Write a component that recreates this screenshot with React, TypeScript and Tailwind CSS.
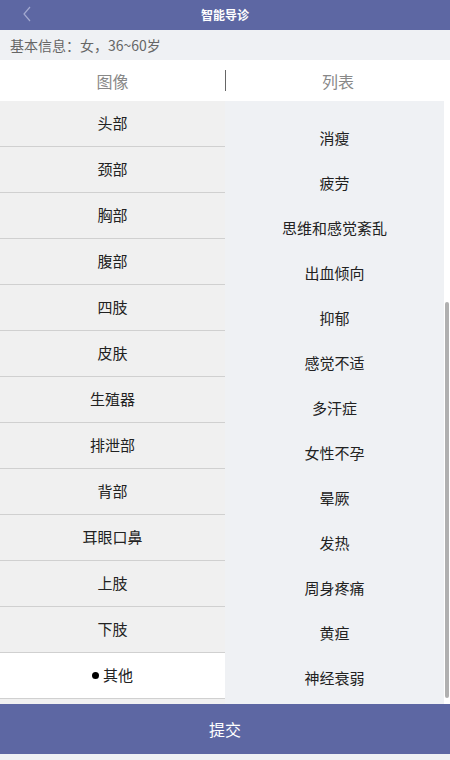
import React from "react";

const left = ["头部", "颈部", "胸部", "腹部", "四肢", "皮肤", "生殖器", "排泄部", "背部", "耳眼口鼻", "上肢", "下肢", "其他"];
const right = ["消瘦", "疲劳", "思维和感觉紊乱", "出血倾向", "抑郁", "感觉不适", "多汗症", "女性不孕", "晕厥", "发热", "周身疼痛", "黄疸", "神经衰弱"];

export default function App() {
  return (
    <div
      className="w-[450px] h-[760px] bg-[#eff1f4] flex flex-col overflow-hidden"
      style={{ fontFamily: '"Noto Sans CJK SC", "Noto Sans", sans-serif' }}
    >
      <div className="h-[30px] bg-[#5d67a3] relative flex items-center justify-center shrink-0">
        <svg className="absolute left-[22px] top-[6px]" width="10" height="16" viewBox="0 0 10 16">
          <path d="M8 1 L2 8 L8 15" fill="none" stroke="#a3a9d0" strokeWidth="1.2" />
        </svg>
        <span className="text-white text-[12px] font-bold leading-none">智能导诊</span>
      </div>
      <div className="h-[30px] flex items-center pl-[10px] text-[14px] text-[#666] shrink-0">
        基本信息：女，36~60岁
      </div>
      <div className="h-[41px] bg-white flex items-center shrink-0">
        <div className="w-[225px] text-center text-[16px] text-[#888]">图像</div>
        <div className="w-px h-[21px] bg-[#666]" />
        <div className="flex-1 text-center text-[16px] text-[#888]">列表</div>
      </div>
      <div className="h-[603px] flex shrink-0">
        <div className="w-[225px] bg-[#f0f0f0] flex flex-col">
          {left.map((t, i) => (
            <div
              key={t}
              className={
                "h-[46px] shrink-0 border-b border-[#d0d0d0] flex items-center justify-center text-[15px] text-[#222] " +
                (i === left.length - 1 ? "bg-white" : "")
              }
            >
              {i === left.length - 1 ? (
                <span className="flex items-center gap-[4px]">
                  <span className="w-[7px] h-[7px] rounded-full bg-black inline-block" />
                  {t}
                </span>
              ) : (
                t
              )}
            </div>
          ))}
        </div>
        <div className="w-[219px] bg-[#eff1f4] pt-[15px] flex flex-col">
          {right.map((t) => (
            <div key={t} className="h-[45px] shrink-0 flex items-center justify-center text-[15px] text-[#222]">
              {t}
            </div>
          ))}
        </div>
        <div className="flex-1 bg-white relative">
          <div className="absolute left-[1px] top-[201px] w-[4px] h-[396px] rounded-[2px] bg-[#b0b0b0]" />
        </div>
      </div>
      <div className="h-[50px] bg-[#5d67a3] flex items-center justify-center text-white text-[16px] shrink-0">
        提交
      </div>
    </div>
  );
}
